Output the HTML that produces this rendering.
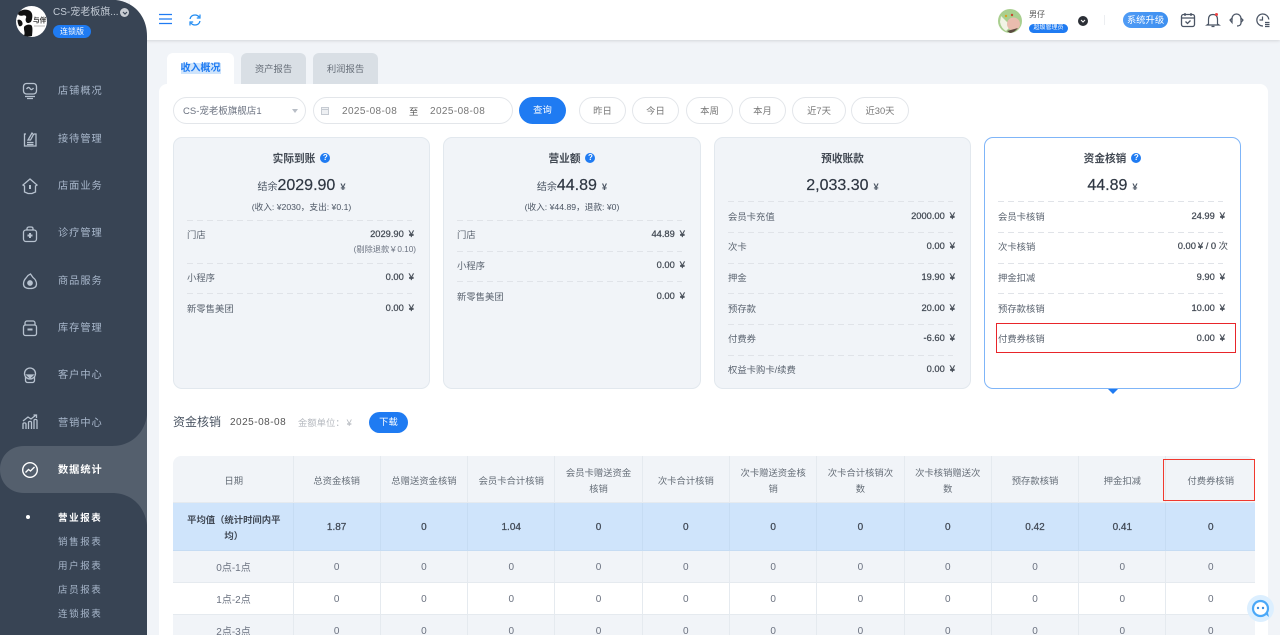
<!DOCTYPE html>
<html lang="zh"><head><meta charset="utf-8"><title>收入概况</title>
<style>
*{box-sizing:border-box;margin:0;padding:0}
html,body{width:1280px;height:635px;overflow:hidden;background:#f1f4f8}
body{position:relative;font-family:"Liberation Sans","Noto Sans CJK SC",sans-serif;font-size:9.33px;color:#4b5563}
.a{position:absolute;white-space:nowrap}
.nav{position:absolute;left:58px;font-size:10.2px;line-height:16px;color:#a9b8cc;letter-spacing:1px;white-space:nowrap;margin-top:1px}
.sub{position:absolute;left:58px;font-size:9.5px;letter-spacing:1.6px;line-height:14px;color:#a9b8cc;white-space:nowrap}
.ic{position:absolute;left:21px;width:18px;height:18px;fill:none;stroke:#b7c2cf;stroke-width:1.3}
.tab{position:absolute;top:53px;height:32px;border-radius:6px 6px 0 0;background:#d9dfe5;color:#666e78;text-align:center;line-height:32px;font-size:9.33px}
.pill{position:absolute;top:97px;height:27px;border:1px solid #e3e6ea;border-radius:14px;text-align:center;line-height:27px;font-size:9.33px;color:#777;background:#fff}
.card{position:absolute;top:137px;width:257px;height:252px;border:1px solid #e2e8ee;border-radius:9px;background:#f1f4f8}
.ttl{position:absolute;left:0;right:0;top:13px;text-align:center;font-size:10.67px;font-weight:700;line-height:16px;color:#434a54}
.q{display:inline-block;width:10px;height:10px;border-radius:50%;background:#1f7bf2;color:#fff;font-size:8px;line-height:10px;text-align:center;font-weight:700;margin-left:5px;vertical-align:2px}
.big{position:absolute;left:0;right:0;top:37px;text-align:center;font-size:16px;line-height:22px;color:#2f3743;-webkit-text-stroke:.2px #2f3743}
.big small{font-size:10px;color:#4b5563;-webkit-text-stroke:0}
.big i{font-style:normal;font-size:9.33px;margin-left:5px;font-weight:700;-webkit-text-stroke:0;color:#4b5563}
.note{position:absolute;left:0;right:0;top:63px;text-align:center;font-size:8.67px;line-height:12px;color:#4b5563}
.d{position:absolute;left:13px;width:225px;height:1px;background:repeating-linear-gradient(90deg,#e0e3e8 0 6px,transparent 6px 10px)}
.l{position:absolute;left:13px;font-size:9.33px;line-height:14px;color:#5b6470;white-space:nowrap}
.v{position:absolute;right:15px;font-size:9.33px;line-height:14px;color:#434a54;-webkit-text-stroke:.25px #434a54;white-space:nowrap}
.v b{font-weight:400;margin-left:5px}
table{position:absolute;left:173px;top:456px;width:1082px;border-collapse:separate;border-spacing:0;table-layout:fixed;font-size:10px;color:#6b7280;border-radius:8px 8px 0 0;overflow:hidden}
td,th{text-align:center;font-weight:400;border-right:1px solid #e5eaef;border-bottom:1px solid #e5eaef;vertical-align:middle;padding:0}
th{height:47px;background:#f1f4f8;font-size:9.33px;line-height:16px;color:#666e78;padding:3px 8px 0;border-right-width:1.5px}
tr.avg td{height:48px;background:#cfe4fb;color:#414955;-webkit-text-stroke:.25px #414955;line-height:16px;border-color:#c6dcf3;font-size:10px;padding-top:3px}
tr.avg td:first-child{font-size:9.33px;padding:2px 11px 0 13px;font-weight:700;-webkit-text-stroke:0}
tr.g td{height:32px;background:#f1f4f8;font-size:10px;padding-top:1px}
tr.w td{height:32px;background:#fff;font-size:10px;padding-top:1px}
tr.g td:first-child,tr.w td:first-child{padding:0 0 0 1.5px}
th:first-child{padding-left:10px}
tr td:last-child,tr th:last-child{border-right:0}
</style></head>
<body>
<!-- header -->
<div class="a" style="left:130px;top:0;width:1150px;height:40px;background:#fff;box-shadow:0 1px 3px rgba(0,0,0,.12)"></div>
<!-- sidebar -->
<svg class="a" style="left:0;top:0" width="148" height="635" viewBox="0 0 148 635">
<path d="M0 0H116C134 2 147 16 147 36V635H0Z" fill="#384454"/>
<path d="M147 415C145 432 132 446 112 446H24C10 446 0 456 0 469.5C0 483 10 493 24 493H112C132 493 145 507 147 525Z" fill="#545f6d"/>
</svg>
<!-- logo -->
<svg class="a" style="left:16px;top:6px" width="31" height="31" viewBox="0 0 31 31">
<circle cx="15.5" cy="15.5" r="15.5" fill="#fff"/>
<path d="M2 8C3 4 9 3 12 4C16 5 17 9 16 13C15.500 16 14 17 12 17C10 17 9 14 10 12C11 10 9 9 7 9.500C5 10 3 10 2 8Z" fill="#111"/>
<path d="M1.500 14C3 13 6 14 6.500 17C7 19 5 21 3 20C2 18 1.500 16 1.500 14Z" fill="#111"/>
<path d="M8 21C9 19 13 18 15 19C17 20 16.500 25 16 30C13 31 10 30.500 8 29.500C9.500 27 7.500 24 8 21Z" fill="#111"/>
<text x="17" y="16.500" font-size="6.67" font-weight="700" fill="#333" font-family="Liberation Sans,Noto Sans CJK SC,sans-serif">与伴</text>
<path d="M18 20H29" stroke="#bbb" stroke-width="1"/>
</svg>
<div class="a" style="left:53px;top:5px;font-size:10px;line-height:16px;color:#c4ccd6">CS-宠老板旗...</div>
<div class="a" style="left:120px;top:8px;width:9px;height:9px;border-radius:50%;background:#c8ccd2"></div>
<svg class="a" style="left:121.5px;top:9.5px" width="6" height="6" viewBox="0 0 6 6"><path d="M1 2L3 4L5 2" fill="none" stroke="#384454" stroke-width="1.2"/></svg>
<div class="a" style="left:53px;top:25px;width:38px;height:13px;border-radius:7px;background:#1f7bf2;color:#fff;font-size:8px;line-height:13px;text-align:center">连锁版</div>

<svg class="ic" style="top:82px" viewBox="0 0 18 18"><rect x="2.5" y="1.5" width="13" height="10.5" rx="3"/><path d="M5.500 7C7 5 8 5 9 6.500S11 8 12.500 6M4 14.500H14M6 16.500H12"/></svg>
<div class="nav" style="top:82.5px">店铺概况</div>
<svg class="ic" style="top:130px" viewBox="0 0 18 18"><path d="M5 4H3.500V16H15V4H13"/><path d="M6 12.500H12.500M6 14.500H12.500M7 10L11 3L12.500 4.500L9.500 10Z"/></svg>
<div class="nav" style="top:130.5px">接待管理</div>
<svg class="ic" style="top:177px" viewBox="0 0 18 18"><path d="M2 8L9 2L16 8L14.500 9V15L11 16.500H7L3.500 15V9Z"/><path d="M9 8V12" stroke-width="2"/></svg>
<div class="nav" style="top:177.5px">店面业务</div>
<svg class="ic" style="top:225px" viewBox="0 0 18 18"><rect x="2.5" y="5" width="13" height="11.5" rx="2.5"/><path d="M6 5V3.500C6 2.500 7 2 8 2H10C11 2 12 2.500 12 3.500V5"/><path d="M9 8V13M6.500 10.500H11.500" stroke-width="2"/></svg>
<div class="nav" style="top:225px">诊疗管理</div>
<svg class="ic" style="top:272px" viewBox="0 0 18 18"><path d="M5 6C3 8 2.500 10 2.500 12C2.500 15 5 16.500 9 16.500S15.500 15 15.500 12C15.500 9 14 7 12 5.500L9.500 2L7 3.500Z"/><circle cx="9" cy="11" r="2.2" fill="#b7c2cf"/></svg>
<div class="nav" style="top:272.5px">商品服务</div>
<svg class="ic" style="top:319px" viewBox="0 0 18 18"><rect x="2.5" y="6" width="13" height="10.5" rx="2"/><path d="M4 6V4C4 2.800 5 2 6 2H12C13 2 14 2.800 14 4V6"/><path d="M6.500 10.500H11.500" stroke-width="2"/></svg>
<div class="nav" style="top:319.5px">库存管理</div>
<svg class="ic" style="top:366px" viewBox="0 0 18 18"><circle cx="9" cy="7.5" r="5.5"/><path d="M4.500 11V14.500C4.500 15.500 5.500 16.500 6.500 16.500H11.500C12.500 16.500 13.500 15.500 13.500 14.500V11"/><path d="M6 9H12L9 12Z" fill="#b7c2cf"/></svg>
<div class="nav" style="top:367px">客户中心</div>
<svg class="ic" style="top:413px" viewBox="0 0 18 18"><path d="M2 16V11C2 9.500 5 9.500 5 11V16M7.500 16V9.500C7.500 8 10.500 8 10.500 9.500V16M13 16V7.500C13 6 16 6 16 7.500V16M2 8L7 4L10 6L15 2M12.500 2H15.500V5"/></svg>
<div class="nav" style="top:414.5px">营销中心</div>
<svg class="ic" style="top:461px;stroke:#fff" viewBox="0 0 18 18"><circle cx="9" cy="9" r="7.3" stroke-width="1.4"/><path d="M4.500 11.500L7.500 8.500L9.500 10L13.500 6" stroke-width="1.4"/></svg>
<div class="nav" style="top:462px;color:#fff;font-weight:700">数据统计</div>
<div class="a" style="left:26px;top:515px;width:4px;height:4px;border-radius:50%;background:#fff"></div>
<div class="sub" style="top:512px;color:#fff;font-weight:700">营业报表</div>
<div class="sub" style="top:536px">销售报表</div>
<div class="sub" style="top:560px">用户报表</div>
<div class="sub" style="top:584px">店员报表</div>
<div class="sub" style="top:608px">连锁报表</div>

<!-- header icons -->
<svg class="a" style="left:158px;top:13px" width="15" height="12" viewBox="0 0 15 12"><path d="M1 1.500H14M1 6H14M1 10.500H14" stroke="#1f7bf2" stroke-width="1.3" fill="none"/></svg>
<svg class="a" style="left:188px;top:13px" width="14" height="14" viewBox="0 0 14 14"><path d="M2 6C2.500 3.500 4.500 2 7 2C8.800 2 10.300 2.800 11.200 4.200M12 8C11.500 10.500 9.500 12 7 12C5.200 12 3.700 11.200 2.800 9.800" fill="none" stroke="#1f8bf2" stroke-width="1.3"/><path d="M12 1.500V5H8.800M2 12.500V9H5.200" fill="none" stroke="#1f8bf2" stroke-width="1.2"/></svg>

<svg class="a" style="left:998px;top:9px" width="24" height="24" viewBox="0 0 24 24"><circle cx="12" cy="12" r="12" fill="#a9cf8f"/><path d="M3 7L13 17L8 22Q3 19 2 13Z" fill="#f2f4e6"/><circle cx="15.5" cy="15" r="6.5" fill="#e9bcae"/><path d="M9 22L20 19Q16 24 12 24Z" fill="#5b4b40"/><circle cx="8" cy="7" r="1.2" fill="#d9a021"/><circle cx="14" cy="6" r="1.2" fill="#c9452e"/></svg>
<div class="a" style="left:1029px;top:8px;font-size:8px;line-height:13px;color:#555">男仔</div>
<div class="a" style="left:1029px;top:24px;width:39px;height:8.5px;border-radius:5px;background:#1f7bf2;color:#fff;font-size:6px;line-height:8.5px;text-align:center">超级管理员</div>
<svg class="a" style="left:1078px;top:16px" width="10" height="10" viewBox="0 0 10 10"><circle cx="5" cy="5" r="5" fill="#2b2f36"/><path d="M3 4L5 6L7 4" fill="none" stroke="#fff" stroke-width="1"/></svg>
<div class="a" style="left:1104px;top:15px;width:1px;height:10px;background:#eceef1"></div>
<div class="a" style="left:1123px;top:12px;width:45px;height:16px;border-radius:8px;background:linear-gradient(90deg,#4f9bf5,#3d8ff0);color:#fff;font-size:9.33px;line-height:16px;text-align:center">系统升级</div>
<svg class="a" style="left:1180px;top:12px" width="16" height="16" viewBox="0 0 16 16"><rect x="1.5" y="2.5" width="13" height="12" rx="2" fill="none" stroke="#4a5464" stroke-width="1.3"/><path d="M1.500 6H14.500M5 1V4M11 1V4M5.500 9.500L7.500 11.500L10.500 8.500" fill="none" stroke="#4a5464" stroke-width="1.3"/></svg>
<svg class="a" style="left:1205px;top:12px" width="16" height="16" viewBox="0 0 16 16"><path d="M3.500 12V7.500C3.500 4.500 5 2.500 8 2.500S12.500 4.500 12.500 7.500V12L14 13H2ZM6.500 14.500H9.500" fill="none" stroke="#4a5464" stroke-width="1.2"/><circle cx="11.500" cy="2.500" r="1.5" fill="#ef4444"/></svg>
<svg class="a" style="left:1229px;top:12px" width="15" height="16" viewBox="0 0 15 16"><path d="M3 8V6.500C3 4 5 2 7.500 2S12 4 12 6.500V8M8 14C10 14 12 13 12 11" fill="none" stroke="#4a5464" stroke-width="1.2"/><path d="M3 6L1 8L3 10.500ZM12 6L14 8L12 10.500Z" fill="none" stroke="#4a5464" stroke-width="1.2"/></svg>
<svg class="a" style="left:1255px;top:12px" width="16" height="16" viewBox="0 0 16 16"><path d="M8 14A6 6 0 1 1 13.800 7.500M7.500 4.500V8H4.500M10 10.500H14.500M10 12.500H14.500M10 14.500H14.500" fill="none" stroke="#4a5464" stroke-width="1.2"/></svg>

<!-- tabs -->
<div class="tab" style="left:167px;width:67px;background:#fff;color:#1f7bf2;font-weight:700;font-size:10px"><span style="background:#cfe4fb">收入概况</span></div>
<div class="tab" style="left:241px;width:65px">资产报告</div>
<div class="tab" style="left:313px;width:65px">利润报告</div>
<!-- panel -->
<div class="a" style="left:159px;top:84px;width:1109px;height:560px;background:#fff;border-radius:8px"></div>

<div class="pill" style="left:173px;width:133px;text-align:left;padding-left:9px;color:#6b7280;font-size:9.5px">CS-宠老板旗舰店1</div>
<div class="a" style="left:292px;top:109px;border-left:3px solid transparent;border-right:3px solid transparent;border-top:4px solid #b8bec6"></div>
<div class="pill" style="left:313px;width:200px"></div>
<svg class="a" style="left:320px;top:106px" width="10" height="10" viewBox="0 0 10 10"><rect x="1.5" y="1.5" width="7" height="7" fill="#eef0f3" stroke="#c6cbd2"/><path d="M1.500 3.500H8.500" stroke="#c6cbd2"/></svg>
<div class="a" style="left:342px;top:105px;font-size:10px;line-height:14px;letter-spacing:.4px;color:#777">2025-08-08</div>
<div class="a" style="left:409px;top:105px;font-size:9.33px;line-height:14px;color:#555">至</div>
<div class="a" style="left:430px;top:105px;font-size:10px;line-height:14px;letter-spacing:.4px;color:#777">2025-08-08</div>
<div class="a" style="left:519px;top:97px;width:47px;height:27px;border-radius:14px;background:#1f7bf2;color:#fff;text-align:center;line-height:27px;font-size:9.33px">查询</div>
<div class="pill" style="left:579px;width:47px">昨日</div>
<div class="pill" style="left:632px;width:47px">今日</div>
<div class="pill" style="left:686px;width:47px">本周</div>
<div class="pill" style="left:739px;width:47px">本月</div>
<div class="pill" style="left:792px;width:54px">近7天</div>
<div class="pill" style="left:851px;width:58px">近30天</div>

<!-- card 1 -->
<div class="card" style="left:173px">
<div class="ttl">实际到账<span class="q">?</span></div>
<div class="big"><small>结余</small>2029.90<i>¥</i></div>
<div class="note">(收入: ¥2030，支出: ¥0.1)</div>
<div class="d" style="top:82px"></div>
<div class="l" style="top:90px">门店</div><div class="v" style="top:89px">2029.90<b>¥</b></div>
<div class="a" style="right:13px;top:106px;font-size:8.2px;line-height:12px;color:#6b7280">(剔除退款￥0.10)</div>
<div class="d" style="top:125px"></div>
<div class="l" style="top:133px">小程序</div><div class="v" style="top:132px">0.00<b>¥</b></div>
<div class="d" style="top:155px"></div>
<div class="l" style="top:164px">新零售美团</div><div class="v" style="top:163px">0.00<b>¥</b></div>
</div>
<!-- card 2 -->
<div class="card" style="left:443px;width:258px">
<div class="ttl">营业额<span class="q">?</span></div>
<div class="big"><small>结余</small>44.89<i>¥</i></div>
<div class="note">(收入: ¥44.89，退款: ¥0)</div>
<div class="d" style="top:82px"></div>
<div class="l" style="top:90px">门店</div><div class="v" style="top:89px">44.89<b>¥</b></div>
<div class="d" style="top:113px"></div>
<div class="l" style="top:121px">小程序</div><div class="v" style="top:120px">0.00<b>¥</b></div>
<div class="d" style="top:143px"></div>
<div class="l" style="top:152px">新零售美团</div><div class="v" style="top:151px">0.00<b>¥</b></div>
</div>
<!-- card 3 -->
<div class="card" style="left:714px">
<div class="ttl">预收账款</div>
<div class="big">2,033.30<i>¥</i></div>
<div class="d" style="top:63px"></div>
<div class="l" style="top:72px">会员卡充值</div><div class="v" style="top:71px">2000.00<b>¥</b></div>
<div class="d" style="top:94px"></div>
<div class="l" style="top:102px">次卡</div><div class="v" style="top:101px">0.00<b>¥</b></div>
<div class="d" style="top:125px"></div>
<div class="l" style="top:133px">押金</div><div class="v" style="top:132px">19.90<b>¥</b></div>
<div class="d" style="top:155px"></div>
<div class="l" style="top:164px">预存款</div><div class="v" style="top:163px">20.00<b>¥</b></div>
<div class="d" style="top:186px"></div>
<div class="l" style="top:194px">付费券</div><div class="v" style="top:193px">-6.60<b>¥</b></div>
<div class="d" style="top:217px"></div>
<div class="l" style="top:225px">权益卡购卡/续费</div><div class="v" style="top:224px">0.00<b>¥</b></div>
</div>
<!-- card 4 -->
<div class="card" style="left:984px;background:#fff;border-color:#7fb5f8">
<div class="ttl">资金核销<span class="q">?</span></div>
<div class="big">44.89<i>¥</i></div>
<div class="d" style="top:63px"></div>
<div class="l" style="top:72px">会员卡核销</div><div class="v" style="top:71px">24.99<b>¥</b></div>
<div class="d" style="top:94px"></div>
<div class="l" style="top:102px">次卡核销</div><div class="v" style="top:101px;right:12px">0.00<span style="margin-left:2px">¥</span> / 0 <span style="-webkit-text-stroke:0">次</span></div>
<div class="d" style="top:125px"></div>
<div class="l" style="top:133px">押金扣减</div><div class="v" style="top:132px">9.90<b>¥</b></div>
<div class="d" style="top:155px"></div>
<div class="l" style="top:164px">预存款核销</div><div class="v" style="top:163px">10.00<b>¥</b></div>
<div class="l" style="top:194px">付费券核销</div><div class="v" style="top:193px">0.00<b>¥</b></div>
</div>
<div class="a" style="left:996px;top:323px;width:240px;height:30px;border:1.2px solid #e8252a"></div>
<div class="a" style="left:1108px;top:389px;border-left:5px solid transparent;border-right:5px solid transparent;border-top:5px solid #1f7bf2"></div>

<!-- section title -->
<div class="a" style="left:173px;top:413px;font-size:12px;line-height:18px;color:#4b5563">资金核销</div>
<div class="a" style="left:230px;top:416px;font-size:10px;line-height:14px;letter-spacing:.5px;color:#555">2025-08-08</div>
<div class="a" style="left:298px;top:415.5px;font-size:9.33px;line-height:14px;color:#b5b9bf">金额单位：<span style="margin-left:2px">¥</span></div>
<div class="a" style="left:369px;top:412px;width:39px;height:21px;border-radius:11px;background:#1f7bf2;color:#fff;text-align:center;line-height:21px;font-size:9.33px">下载</div>

<!-- table -->
<table>
<colgroup><col style="width:120.5px"><col style="width:87.3px"><col style="width:87.3px"><col style="width:87.3px"><col style="width:87.3px"><col style="width:87.3px"><col style="width:87.3px"><col style="width:87.3px"><col style="width:87.3px"><col style="width:87.3px"><col style="width:87.3px"><col style="width:88.5px"></colgroup>
<tr><th>日期</th><th>总资金核销</th><th>总赠送资金核销</th><th>会员卡合计核销</th><th>会员卡赠送资金核销</th><th>次卡合计核销</th><th>次卡赠送资金核销</th><th>次卡合计核销次数</th><th>次卡核销赠送次数</th><th>预存款核销</th><th>押金扣减</th><th>付费券核销</th></tr>
<tr class="avg"><td>平均值（统计时间内平均）</td><td>1.87</td><td>0</td><td>1.04</td><td>0</td><td>0</td><td>0</td><td>0</td><td>0</td><td>0.42</td><td>0.41</td><td>0</td></tr>
<tr class="g"><td>0点-1点</td><td>0</td><td>0</td><td>0</td><td>0</td><td>0</td><td>0</td><td>0</td><td>0</td><td>0</td><td>0</td><td>0</td></tr>
<tr class="w"><td>1点-2点</td><td>0</td><td>0</td><td>0</td><td>0</td><td>0</td><td>0</td><td>0</td><td>0</td><td>0</td><td>0</td><td>0</td></tr>
<tr class="g"><td>2点-3点</td><td>0</td><td>0</td><td>0</td><td>0</td><td>0</td><td>0</td><td>0</td><td>0</td><td>0</td><td>0</td><td>0</td></tr>
</table>
<div class="a" style="left:1163px;top:459px;width:92px;height:42px;border:1.5px solid #f0392f"></div>

<!-- chat bubble -->
<svg class="a" style="left:1247px;top:595px" width="27" height="27" viewBox="0 0 27 27"><circle cx="13.5" cy="13.5" r="13.5" fill="#dcefff"/><circle cx="13.5" cy="13.5" r="7.5" fill="#fff" stroke="#4aa8f8" stroke-width="2.2"/><path d="M18 19L22 22L20.500 16Z" fill="#4aa8f8"/><circle cx="11" cy="13" r="1.2" fill="#3a8fe0"/><circle cx="16" cy="13" r="1.2" fill="#3a8fe0"/></svg>
</body></html>
